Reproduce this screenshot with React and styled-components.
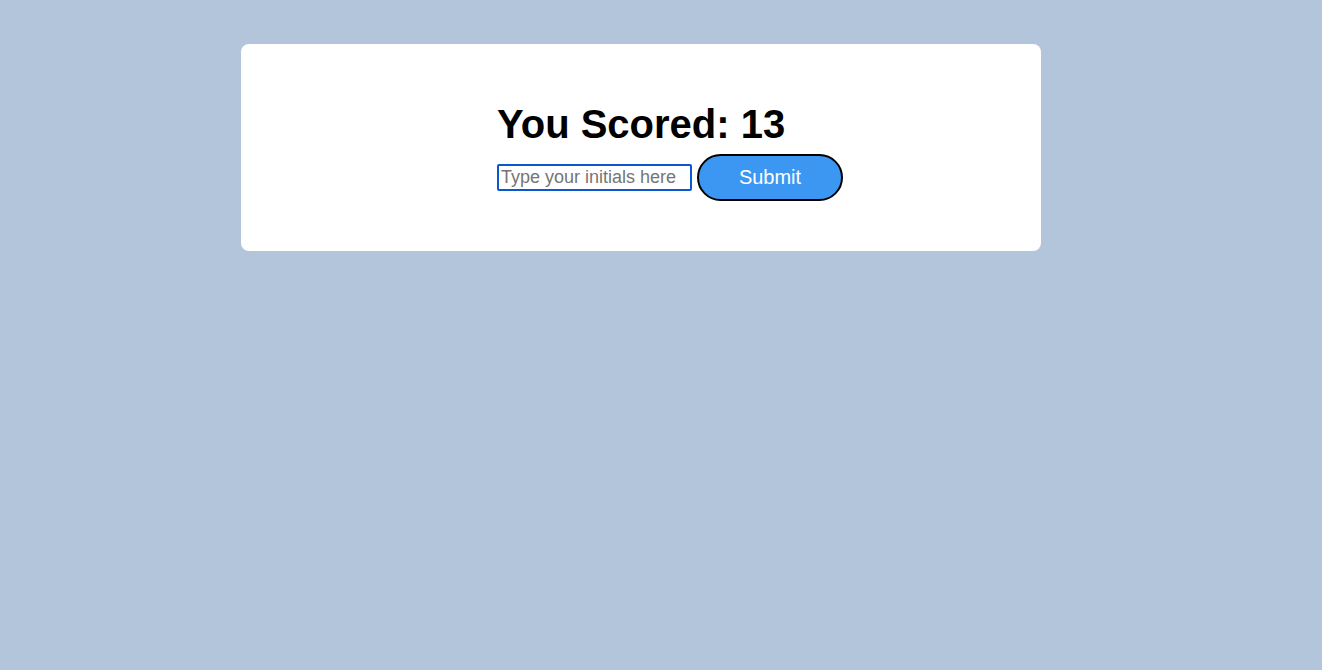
import styled, { createGlobalStyle } from "styled-components"

const Global = createGlobalStyle`
    body {
        margin: 0;
        background: #b3c5da;
        font-family: "Liberation Sans", Arial, sans-serif;
    }
`;

const App = () => {
    return <Page>
        <Global />
        <Card>
            <Content>
                <Title>You Scored: 13</Title>
                <Form onSubmit={(e) => e.preventDefault()}>
                    <Initials type="text" placeholder="Type your initials here" />
                    <SubmitButton type="submit">Submit</SubmitButton>
                </Form>
            </Content>
        </Card>
    </Page>
};

const Page = styled.div`
    min-height: 670px;
    padding: 44px 40px 0 0;
    box-sizing: border-box;
`;

const Card = styled.div`
    width: 800px;
    margin: 0 auto;
    background: white;
    border-radius: 8px;
    padding: 57px 0 50px;
    box-sizing: border-box;
`;

const Content = styled.div`
    width: 288px;
    margin: 0 auto;
    display: flex;
    flex-direction: column;
    align-items: flex-start;
`;

const Title = styled.h1`
    margin: 0 0 7px;
    font-size: 40px;
    font-weight: 700;
    line-height: 46px;
    color: black;
    white-space: nowrap;
`;

const Form = styled.form`
    display: flex;
    align-items: center;
    gap: 5px;
    width: max-content;
`;

const Initials = styled.input`
    width: 195px;
    height: 27px;
    box-sizing: border-box;
    border: 2px solid #0b57d0;
    border-radius: 2px;
    padding: 0 2px;
    font-family: "Liberation Sans", Arial, sans-serif;
    font-size: 18px;
    color: black;
    outline: none;
    &::placeholder {
        color: #757575;
    }
`;

const SubmitButton = styled.button`
    width: 146px;
    height: 47px;
    box-sizing: border-box;
    border: 2px solid black;
    border-radius: 24px;
    background: #3c97f3;
    color: white;
    font-family: "Liberation Sans", Arial, sans-serif;
    font-size: 20px;
    cursor: pointer;
`;

export default App;
